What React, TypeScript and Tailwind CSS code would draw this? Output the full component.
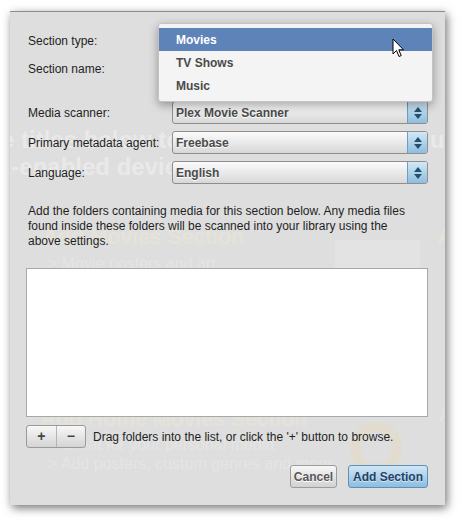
import React from 'react';

const SelectBox: React.FC<{ value: string }> = ({ value }) => (
  <div className="flex h-[23px] flex-1 overflow-hidden rounded-[3px] border border-[#8e8e8e] bg-gradient-to-b from-[#fbfbfb] to-[#d8d8d8]">
    <div className="flex flex-1 items-center pl-[3px] text-[12px] font-bold text-[#4b4b4b] [text-shadow:0_1px_0_#fff]">
      {value}
    </div>
    <div className="flex w-[20px] flex-col items-center justify-center gap-[2px] border-l border-[#6f9cbf] bg-gradient-to-b from-[#d3e8f6] to-[#8dbedf]">
      <svg width="8" height="5" viewBox="0 0 8 5">
        <path d="M4 0 L8 5 L0 5 Z" fill="#24506f" />
      </svg>
      <svg width="8" height="5" viewBox="0 0 8 5">
        <path d="M0 0 L8 0 L4 5 Z" fill="#24506f" />
      </svg>
    </div>
  </div>
);

const Row: React.FC<{ label: string; className?: string; children: React.ReactNode }> = ({ label, className, children }) => (
  <div className={`flex h-[23px] items-center ${className ?? ''}`}>
    <div className="w-[146px] pl-[2px] text-[12px] text-[#1f1f1f]">{label}</div>
    {children}
  </div>
);

// faint page content showing through the translucent sheet
const Ghost: React.FC = () => (
  <div className="pointer-events-none absolute inset-0">
    <div className="absolute left-[-9px] top-[116px] text-[24px] font-bold leading-none text-white/35 whitespace-nowrap">e titles below to sc</div>
    <div className="absolute left-[420px] top-[116px] text-[24px] font-bold leading-none text-white/35">ur</div>
    <div className="absolute left-[-12px] top-[143px] text-[24px] font-bold leading-none text-white/35 whitespace-nowrap">x-enabled devices</div>
    <div className="absolute left-[32px] top-[214px] text-[22px] font-bold leading-none tracking-[-0.4px] text-[#f4ecd2]/35 whitespace-nowrap">Add Movies Section</div>
    <div className="absolute left-[427px] top-[214px] text-[22px] font-bold leading-none text-[#f4ecd2]/35">A</div>
    <div className="absolute left-[38px] top-[244px] text-[16px] leading-none text-white/20 whitespace-nowrap">&gt; Movie posters and art</div>
    <div className="absolute left-[325px] top-[228px] h-[40px] w-[85px] bg-white/15" />
    <div className="absolute left-[30px] top-[396px] text-[22px] font-bold leading-none tracking-[-0.4px] text-[#f4ecd2]/35 whitespace-nowrap">Add Home Movies Section</div>
    <div className="absolute left-[428px] top-[392px] text-[22px] font-bold leading-none text-[#f4ecd2]/35">A</div>
    <div className="absolute left-[38px] top-[425px] text-[16px] leading-none text-white/20 whitespace-nowrap">&gt; Great for your personal media</div>
    <div className="absolute left-[38px] top-[444px] text-[16px] leading-none text-white/20 whitespace-nowrap">&gt; Add posters, custom genres and more</div>
    <div className="absolute left-[340px] top-[410px] h-[52px] w-[52px] rounded-full border-[10px] border-[#efd9a0]/25" />
  </div>
);

const Cursor: React.FC = () => (
  <svg className="pointer-events-none absolute left-[382px] top-[26px]" width="13" height="20" viewBox="0 0 13 20">
    <path d="M1 1 L1 16 L4.5 12.5 L7 18.5 L9.2 17.6 L6.8 11.8 L11.5 11.8 Z" fill="#fff" stroke="#000" strokeWidth="1" strokeLinejoin="round" />
  </svg>
);

const App: React.FC = () => {
  return (
    <div className="min-h-screen bg-white font-['Liberation_Sans',Arial,sans-serif]">
      <div className="pl-[10px] pt-[11px]">
        <div className="relative h-[494px] w-[435px] overflow-hidden border-t border-[#8c8c8c] bg-[#dedede] shadow-[2px_3px_9px_rgba(0,0,0,0.55)]">
          <Ghost />

          <div className="relative flex flex-col pl-[16px] pr-[17px] pt-[17px]">
            <Row label="Section type:">
              <SelectBox value="Movies" />
            </Row>
            <Row label="Section name:" className="mt-[5px]">
              <div className="h-[23px] flex-1 rounded-[3px] border border-[#9a9a9a] bg-white" />
            </Row>
            <Row label="Media scanner:" className="mt-[21px]">
              <SelectBox value="Plex Movie Scanner" />
            </Row>
            <Row label="Primary metadata agent:" className="mt-[7px]">
              <SelectBox value="Freebase" />
            </Row>
            <Row label="Language:" className="mt-[7px]">
              <SelectBox value="English" />
            </Row>

            <p className="mt-[20px] w-[394px] pl-[2px] text-[12px] leading-[15px] text-[#1f1f1f]">
              Add the folders containing media for this section below. Any media files found inside these folders will be scanned into your library using the above settings.
            </p>

            <div className="mt-[19px] h-[149px] border border-[#a8a8a8] bg-white" />

            <div className="mt-[8px] flex h-[23px] items-center">
              <div className="flex h-[23px] w-[60px] overflow-hidden rounded-[3px] border border-[#9a9a9a] bg-gradient-to-b from-[#f8f8f8] to-[#d4d4d4] text-[14px] font-bold text-[#444]">
                <div className="flex flex-1 items-center justify-center">+</div>
                <div className="flex flex-1 items-center justify-center border-l border-[#b4b4b4]">−</div>
              </div>
              <span className="ml-[7px] text-[12px] text-[#1f1f1f]">Drag folders into the list, or click the '+' button to browse.</span>
            </div>

            <div className="mt-[17px] flex justify-end gap-[11px]">
              <button className="h-[23px] w-[47px] rounded-[3px] border border-[#9c9c9c] bg-gradient-to-b from-[#f7f7f7] to-[#d2d2d2] text-[12px] font-bold text-[#585858] [text-shadow:0_1px_0_#fff]">
                Cancel
              </button>
              <button className="h-[23px] w-[80px] rounded-[3px] border border-[#5f8fb6] bg-gradient-to-b from-[#d0e7f6] to-[#8dbde0] text-[12px] font-bold text-[#1f4166] [text-shadow:0_1px_0_rgba(255,255,255,0.6)]">
                Add Section
              </button>
            </div>
          </div>

          <div className="absolute left-[148px] top-[11px] w-[275px] rounded-[3px] border border-[#c4c4c4] bg-[#f4f4f4] py-[4px] shadow-[0_3px_10px_rgba(0,0,0,0.35)]">
            <div className="flex h-[23px] items-center bg-[#5e83b9] pl-[17px] text-[12px] font-bold text-white">Movies</div>
            <div className="flex h-[23px] items-center pl-[17px] text-[12px] font-bold text-[#4a4a4a]">TV Shows</div>
            <div className="flex h-[23px] items-center pl-[17px] text-[12px] font-bold text-[#4a4a4a]">Music</div>
          </div>

          <Cursor />
        </div>
      </div>
    </div>
  );
};

export default App;
